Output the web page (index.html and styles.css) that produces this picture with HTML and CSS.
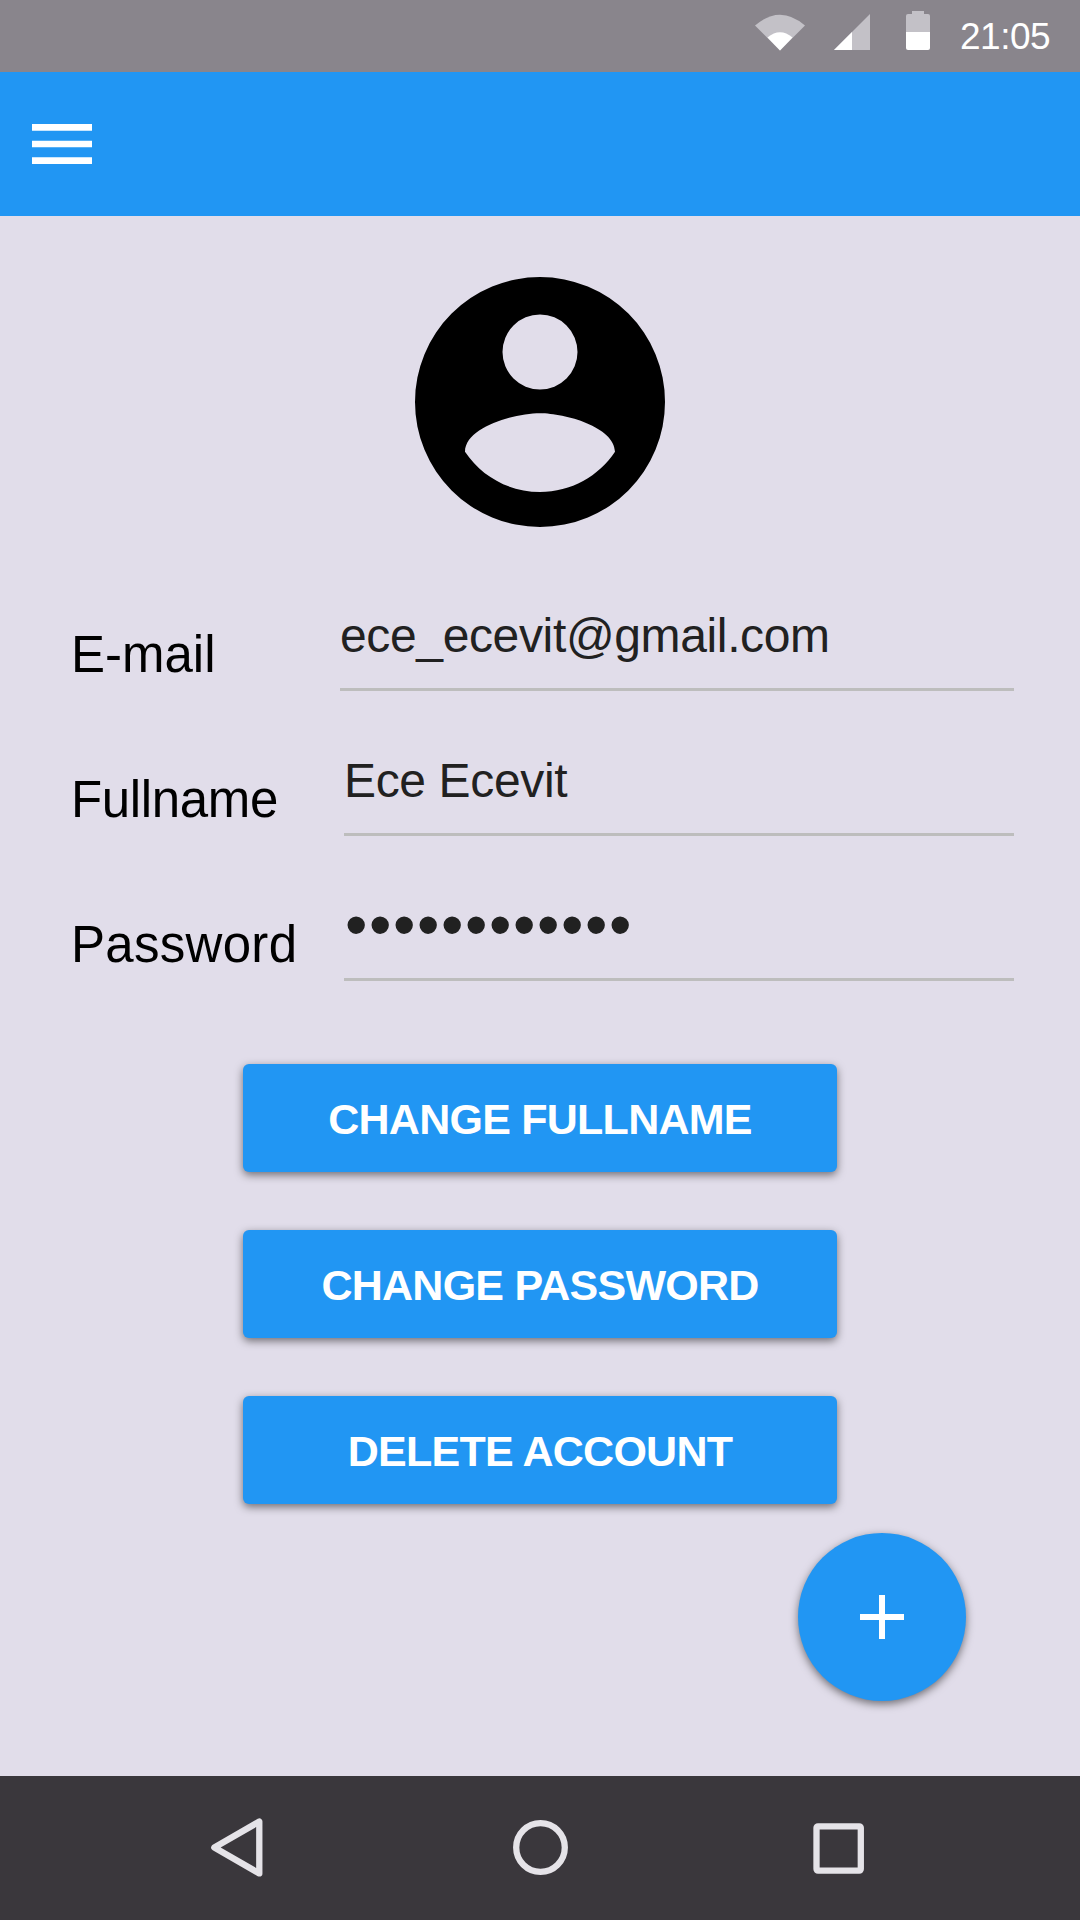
FILE: index.html
```html
<!DOCTYPE html>
<html lang="en">
<head>
<meta charset="utf-8">
<title>Account</title>
<link rel="stylesheet" href="styles.css">
</head>
<body>
<div class="screen">
  <div class="status-bar">
    <svg class="status-icons" width="176" height="72" viewBox="0 0 176 72" aria-hidden="true">
      <path class="dim" d="M0 25.500Q25 4 50 25.500L25 50.500Z"/>
      <path class="lit" d="M12.500 37.500Q25 27.200 37.500 37.500L25 50.500Z"/>
      <path class="dim" d="M79 50L115 14V50Z"/>
      <path class="lit" d="M79 50L97 32V50Z"/>
      <path class="dim" d="M151 32V16a2 2 0 0 1 2-2h4v-3h12v3h4a2 2 0 0 1 2 2v16z"/>
      <path class="lit" d="M151 32h24v16a2 2 0 0 1-2 2h-20a2 2 0 0 1-2-2z"/>
    </svg>
    <span class="clock">21:05</span>
  </div>
  <header class="app-bar">
    <svg width="60" height="40" viewBox="0 0 60 40" aria-label="Menu">
      <path class="lit" d="M0 0h60v6.670H0zM0 16.670h60v6.670H0zM0 33.330h60V40H0z"/>
    </svg>
  </header>
  <main class="content">
    <svg class="avatar" viewBox="2 2 20 20" aria-hidden="true">
      <path fill-rule="evenodd" d="M12 2a10 10 0 1 0 0 20a10 10 0 1 0 0-20zM12 5a3 3 0 1 1 0 6a3 3 0 1 1 0-6zM12 19.200c-2.500 0-4.710-1.280-6-3.220.030-1.990 4-3.080 6-3.080 1.990 0 5.970 1.090 6 3.080-1.290 1.940-3.500 3.220-6 3.220z"/>
    </svg>
    <div class="form">
      <div class="row row-email"><div class="label">E-mail</div><div class="value">ece_ecevit@gmail.com</div></div>
      <div class="row"><div class="label label-name">Fullname</div><div class="value">Ece Ecevit</div></div>
      <div class="row"><div class="label label-password">Password</div><div class="value dots">••••••••••••</div></div>
    </div>
    <div class="actions">
      <button class="btn">CHANGE FULLNAME</button>
      <button class="btn">CHANGE PASSWORD</button>
      <button class="btn">DELETE ACCOUNT</button>
    </div>
    <button class="fab" aria-label="Add">
      <svg width="46" height="46" viewBox="0 0 46 46"><path class="lit" d="M20 1h6v19h19v6h-19v19h-6v-19h-19v-6h19z"/></svg>
    </button>
  </main>
  <nav class="nav-bar">
    <svg width="60" height="60" viewBox="0 0 60 60"><path d="M51.300 3.600V55.400L6.300 29.500Z"/></svg>
    <svg width="60" height="60" viewBox="0 0 60 60"><circle cx="30.500" cy="29.500" r="24.300"/></svg>
    <svg width="60" height="60" viewBox="0 0 60 60"><rect x="4.500" y="8.300" width="44.300" height="44.300" rx="1.500"/></svg>
  </nav>
</div>
</body>
</html>
```
FILE: styles.css
```css
* { box-sizing: border-box; }

body {
  margin: 0;
  font-family: "Liberation Sans", Arial, sans-serif;
}

button {
  border: 0;
  padding: 0;
  font-family: inherit;
}

svg { display: block; }

.screen {
  display: flex;
  flex-direction: column;
  width: 1080px;
  height: 1920px;
  background: #e1ddea;
}

.lit { fill: #fff; }
.dim { fill: #c3c1c7; }

.status-bar {
  display: flex;
  justify-content: flex-end;
  height: 72px;
  padding-right: 28px;
  background: #89858c;
}

.status-icons { margin-right: 29px; }

.clock {
  width: 92px;
  color: #fff;
  font-size: 37px;
  line-height: 74px;
  letter-spacing: -0.5px;
}

.app-bar {
  display: flex;
  align-items: center;
  height: 144px;
  padding-left: 32px;
  background: #2196f3;
}

.content {
  display: flex;
  flex-direction: column;
  align-items: center;
  height: 1560px;
  padding-top: 61px;
}

.avatar {
  width: 250px;
  height: 250px;
}

.form {
  display: flex;
  flex-direction: column;
  gap: 42px;
  align-self: stretch;
  margin-top: 61px;
  padding: 0 66px 0 71px;
}

.row {
  display: grid;
  grid-template-columns: 273px 1fr;
  height: 103px;
}

.row-email { grid-template-columns: 269px 1fr; }

.label {
  height: 103px;
  padding-top: 15px;
  color: #000;
  font-size: 51px;
  line-height: 103px;
}

.label-name { letter-spacing: -0.350px; }
.label-password { letter-spacing: 0.300px; }

.value {
  border-bottom: 3px solid #bdbdbd;
  color: #212121;
  font-size: 48px;
  line-height: 95px;
  letter-spacing: -0.360px;
  white-space: nowrap;
}

.dots {
  padding-left: 1px;
  font-size: 64px;
  letter-spacing: 1.600px;
}

.actions {
  display: flex;
  flex-direction: column;
  gap: 58px;
  margin-top: 83px;
}

.btn {
  width: 594px;
  height: 108px;
  padding-top: 2px;
  border-radius: 6px;
  background: #2196f3;
  box-shadow: 0 3px 9px rgba(0, 0, 0, 0.5);
  color: #fff;
  font-size: 43px;
  font-weight: bold;
  letter-spacing: -0.750px;
}

.fab {
  display: flex;
  align-items: center;
  justify-content: center;
  align-self: flex-end;
  width: 168px;
  height: 168px;
  margin: 29px 114px 0 0;
  border-radius: 50%;
  background: #2196f3;
  box-shadow: 0 3px 9px rgba(0, 0, 0, 0.5);
}

.nav-bar {
  display: flex;
  align-items: center;
  justify-content: space-between;
  height: 144px;
  padding: 0 208px;
  background: #3a373c;
}

.nav-bar svg {
  fill: none;
  stroke: #e5e3e8;
  stroke-width: 6.300px;
  stroke-linejoin: round;
}
```
